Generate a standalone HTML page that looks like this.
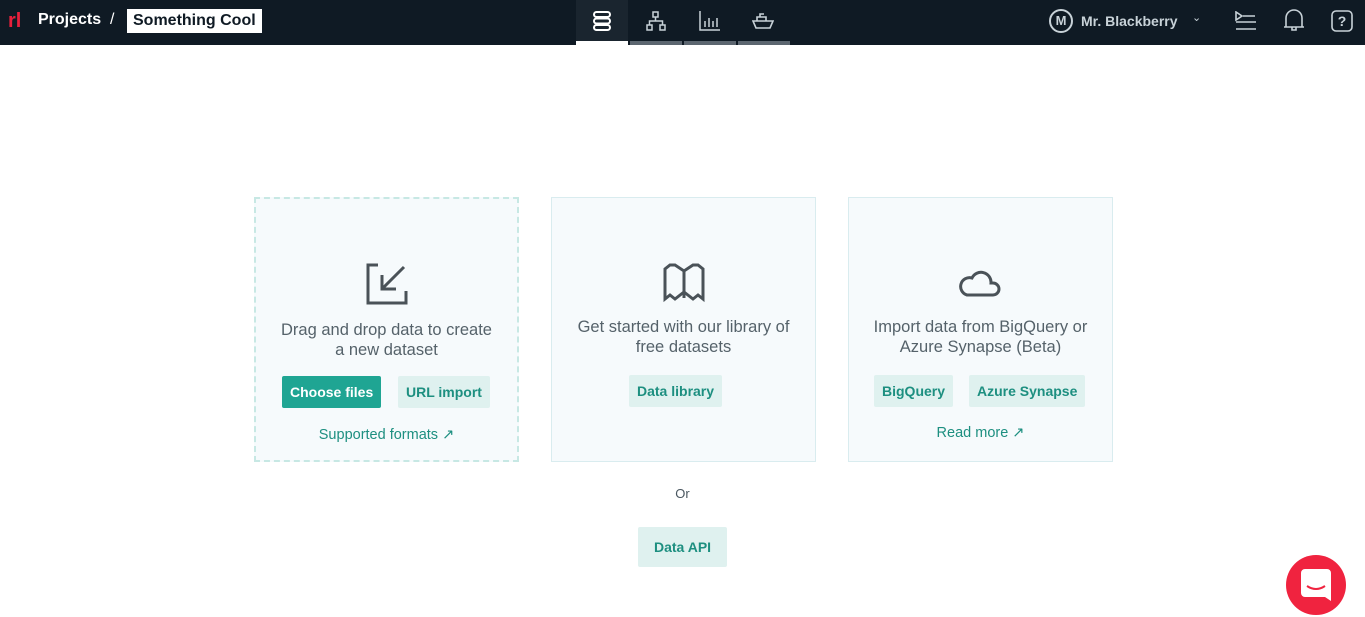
<!DOCTYPE html>
<html><head><style>
*{box-sizing:border-box;margin:0;padding:0}
body{width:1365px;height:617px;background:#fff;font-family:"Liberation Sans",sans-serif;position:relative;overflow:hidden}
.top{position:absolute;left:0;top:0;width:1365px;height:45px;background:#0f1a24}
.abs{position:absolute}
.card{position:absolute;top:197px;width:265px;height:265px;background:#f6fafc;border:1px solid #d9ecef;text-align:center;color:#55626a;font-size:16.5px;line-height:20px}
.card.dash{border:2px dashed #c7e8e4}
.btn{position:absolute;height:32px;line-height:32px;font-size:14px;font-weight:bold;border-radius:2px;padding:0 8px}
.b1{background:#1fa593;color:#fff}
.b2{background:#dff1ef;color:#1d8f80}
.lnk{position:absolute;font-size:14.5px;color:#1d8f80;width:100%;text-align:center}
svg{position:absolute}
</style></head><body>
<div class="top">
 <div class="abs" style="left:8px;top:12px;width:14px;height:18px;color:#e8203c;font-weight:bold;font-size:20px;line-height:18px">rl</div>
 <div class="abs" style="left:38px;top:11px;color:#fff;font-weight:bold;font-size:16px">Projects</div>
 <div class="abs" style="left:110px;top:11px;color:#fff;font-size:16px">/</div>
 <div class="abs" style="left:127px;top:9px;width:135px;height:24px;background:#fff;color:#0f1a24;font-weight:bold;font-size:16px;line-height:24px;padding-left:6px">Something Cool</div>
 <div class="abs" style="left:576px;top:0;width:52px;height:45px;background:#1a252f"></div>
 <div class="abs" style="left:576px;top:41px;width:52px;height:4px;background:#fff"></div>
 <div class="abs" style="left:630px;top:41px;width:52px;height:4px;background:#5c6670"></div>
 <div class="abs" style="left:684px;top:41px;width:52px;height:4px;background:#5c6670"></div>
 <div class="abs" style="left:738px;top:41px;width:52px;height:4px;background:#5c6670"></div>
 <svg style="left:592px;top:11px" width="20" height="20" viewBox="0 0 20 20" fill="none" stroke="#fff" stroke-width="2"><rect x="2" y="1" width="16" height="5" rx="2.5"/><rect x="2" y="7.5" width="16" height="5" rx="2.5"/><rect x="2" y="14" width="16" height="5" rx="2.5"/></svg>
 <svg style="left:645px;top:11px" width="22" height="20" viewBox="0 0 22 20" fill="none" stroke="#c8d2d8" stroke-width="1.5"><rect x="8" y="1" width="5" height="5"/><rect x="2" y="14" width="5" height="5"/><rect x="15" y="14" width="5" height="5"/><path d="M10.5 6v4M4.5 14v-4h13v4"/></svg>
 <svg style="left:699px;top:10px" width="22" height="22" viewBox="0 0 22 22" fill="none" stroke="#c8d2d8" stroke-width="1.5"><path d="M1 1v19h20M6 17v-6M10 17v-9M14 17v-6M18 17v-9"/></svg>
 <svg style="left:752px;top:11px" width="22" height="20" viewBox="0 0 22 20" fill="none" stroke="#c8d2d8" stroke-width="1.6"><path d="M1 10h20l-3 7H4zM5 10V6h9v4M8 6V3h4"/></svg>
 <div class="abs" style="left:1049px;top:9px;width:24px;height:24px;border:2px solid #c8d2d8;border-radius:50%;color:#c8d2d8;font-weight:bold;font-size:13px;line-height:20px;text-align:center">M</div>
 <div class="abs" style="left:1081px;top:13px;color:#c8d2d8;font-weight:bold;font-size:14px">Mr. Blackberry</div>
 <div class="abs" style="left:1192px;top:11px;color:#c8d2d8;font-size:11px">&#8964;</div>
 <svg style="left:1234px;top:11px" width="24" height="20" viewBox="0 0 24 20" fill="none" stroke="#c8d2d8" stroke-width="1.6"><path d="M2 1v8l6-4zM9 5h12M2 11h20M2 18h20"/></svg>
 <svg style="left:1283px;top:9px" width="22" height="24" viewBox="0 0 22 24" fill="none" stroke="#c8d2d8" stroke-width="1.6"><path d="M3 18V9a8 8 0 0 1 16 0v9zM1 18h20M9 18v3h4v-3"/></svg>
 <svg style="left:1331px;top:10px" width="22" height="22" viewBox="0 0 22 22" fill="none" stroke="#c8d2d8" stroke-width="1.6"><rect x="1" y="1" width="20" height="20" rx="4"/><text x="11" y="16" fill="#c8d2d8" stroke="none" font-size="14" font-weight="bold" text-anchor="middle" font-family="Liberation Sans">?</text></svg>
</div>

<div class="card dash" style="left:254px">
 <svg style="left:110px;top:64px" width="42" height="42" viewBox="0 0 42 42" fill="none" stroke="#4a5258" stroke-width="3"><path d="M12 2H2v38h38V28M38 4L16 26M16 12v14h14"/></svg>
 <div class="abs" style="left:0;top:121px;width:100%">Drag and drop data to create<br>a new dataset</div>
 <div class="btn b1" style="left:26px;top:177px">Choose files</div>
 <div class="btn b2" style="left:142px;top:177px">URL import</div>
 <div class="lnk" style="top:226px">Supported formats &#x2197;</div>
</div>
<div class="card" style="left:551px">
 <svg style="left:110px;top:65px" width="44" height="40" viewBox="0 0 44 40" fill="none" stroke="#4a5258" stroke-width="3"><path d="M3 36V6l5-4h5l9 6 9-6h5l5 4v30l-5-4-5 4-9-7-9 7-5-4z M22 8v27"/></svg>
 <div class="abs" style="left:0;top:119px;width:100%">Get started with our library of<br>free datasets</div>
 <div class="btn b2" style="left:77px;top:177px">Data library</div>
</div>
<div class="card" style="left:848px">
 <svg style="left:110px;top:68px" width="42" height="32" viewBox="0 0 42 32" fill="none" stroke="#4a5258" stroke-width="3"><path d="M8 29h26a6 6 0 0 0 0-12h-2a10 10 0 0 0-19-5 8 8 0 0 0-5 17z"/></svg>
 <div class="abs" style="left:0;top:119px;width:100%">Import data from BigQuery or<br>Azure Synapse (Beta)</div>
 <div class="btn b2" style="left:25px;top:177px">BigQuery</div>
 <div class="btn b2" style="left:120px;top:177px">Azure Synapse</div>
 <div class="lnk" style="top:225px">Read more &#x2197;</div>
</div>
<div class="abs" style="left:0;top:486px;width:1365px;text-align:center;font-size:13px;color:#4a5760">Or</div>
<div class="btn b2" style="left:638px;top:527px;height:40px;line-height:40px;padding:0 16px">Data API</div>
<div class="abs" style="left:1286px;top:555px;width:60px;height:60px;border-radius:50%;background:#f0233f"></div>
<svg style="left:1301px;top:569px" width="30" height="32" viewBox="0 0 30 32"><path d="M4 0h22a4 4 0 0 1 4 4v28l-6-4H4a4 4 0 0 1-4-4V4a4 4 0 0 1 4-4z" fill="#fff"/><path d="M6 17q9 6 18 0" stroke="#f0233f" stroke-width="2" fill="none"/></svg>
</body></html>
